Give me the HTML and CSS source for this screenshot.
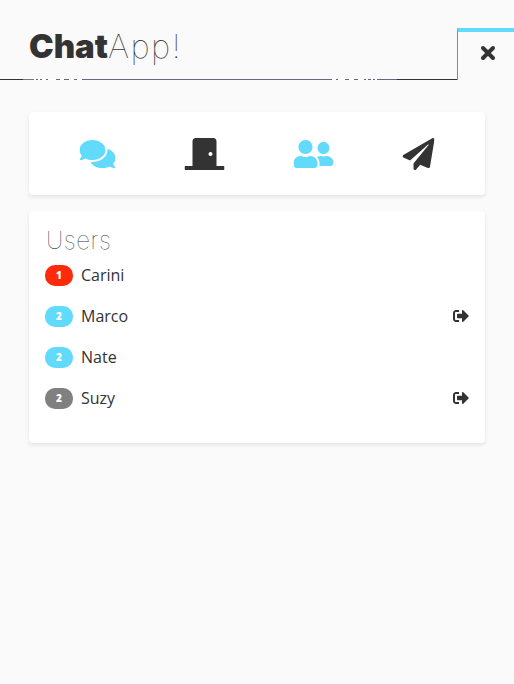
FILE: index.html
```html
<!DOCTYPE html>
<html lang="en">
<head>
<meta charset="utf-8">
<title>ChatApp!</title>
<link rel="stylesheet" href="styles.css">
</head>
<body>
<header class="header">
  <h1 class="brand"><span class="brand-bold">Chat</span><span class="brand-thin">App!</span></h1>
  <button class="close" aria-label="Close"><svg viewBox="0 0 16 16"><path d="M3 3L13 13M13 3L3 13"/></svg></button>
</header>
<main class="content">
  <nav class="card tabs">
    <svg class="icon active" width="36" height="32" viewBox="0 0 576 512"><path d="M416 192c0-88.4-93.1-160-208-160S0 103.6 0 192c0 34.3 14.1 65.9 38 92-13.4 30.2-35.5 54.2-35.8 54.5-2.2 2.3-2.8 5.7-1.5 8.7S4.8 352 8 352c36.6 0 66.9-12.3 88.7-25 32.2 15.7 70.3 25 111.3 25 114.9 0 208-71.6 208-160zm122 220c23.9-26 38-57.7 38-92 0-66.9-53.5-124.2-129.3-148.1.9 6.6 1.3 13.3 1.3 20.1 0 105.9-107.7 192-240 192-10.8 0-21.3-.8-31.7-1.9C207.8 439.6 281.8 480 368 480c41 0 79.1-9.2 111.3-25 21.8 12.7 52.1 25 88.7 25 3.2 0 6.1-1.9 7.3-4.8 1.3-2.9.7-6.3-1.5-8.7-.3-.3-22.4-24.2-35.8-54.5z"/></svg>
    <svg class="icon" width="40" height="32" viewBox="0 0 640 512"><path d="M624 448H512V50.8C512 22.78 490.47 0 464 0H175.99c-26.47 0-48 22.78-48 50.8V448H16c-8.84 0-16 7.16-16 16v32c0 8.84 7.16 16 16 16h608c8.84 0 16-7.16 16-16v-32c0-8.84-7.16-16-16-16zM415.99 288c-17.67 0-32-14.33-32-32s14.33-32 32-32 32 14.33 32 32c.01 17.67-14.32 32-32 32z"/></svg>
    <svg class="icon active" width="40" height="32" viewBox="0 0 640 512"><path d="M192 256c61.900 0 112-50.100 112-112S253.900 32 192 32 80 82.100 80 144s50.100 112 112 112zm76.800 32h-8.300c-20.800 10-43.900 16-68.500 16s-47.600-6-68.500-16h-8.300C51.600 288 0 339.600 0 403.200V432c0 26.500 21.500 48 48 48h288c26.500 0 48-21.500 48-48v-28.800c0-63.600-51.600-115.200-115.200-115.200zM480 256c53 0 96-43 96-96s-43-96-96-96-96 43-96 96 43 96 96 96zm48 32h-3.800c-13.900 4.800-28.600 8-44.200 8s-30.300-3.200-44.200-8H432c-20.400 0-39.200 5.900-55.700 15.400 24.400 26.300 39.700 61.200 39.700 99.800v38.400c0 2.200-.5 4.300-.6 6.400H592c26.500 0 48-21.500 48-48 0-61.900-50.100-112-112-112z"/></svg>
    <svg class="icon" width="32" height="32" viewBox="0 0 512 512"><path d="M476 3.200L12.500 270.600c-18.100 10.400-15.800 35.600 2.200 43.200L121 358.400l287.300-253.200c5.500-4.900 13.300 2.600 8.600 8.300L176 407v80.500c0 23.600 28.500 32.900 42.500 15.800L282 426l124.600 52.200c14.200 6 30.400-2.900 33-18.200l72-432C515 7.800 493.300-6.800 476 3.200z"/></svg>
  </nav>
  <section class="card users">
    <h2 class="users-title">Users</h2>
    <ul class="user-list">
      <li class="user"><span class="badge red">1</span><span>Carini</span></li>
      <li class="user"><span class="badge">2</span><span>Marco</span><svg class="exit" viewBox="0 0 512 512"><path d="M497 273L329 441c-15 15-41 4.500-41-17v-96H152c-13.300 0-24-10.700-24-24v-96c0-13.300 10.700-24 24-24h136V88c0-21.400 25.900-32 41-17l168 168c9.300 9.400 9.300 24.600 0 34zM192 436v-40c0-6.600-5.400-12-12-12H96c-17.700 0-32-14.300-32-32V160c0-17.700 14.300-32 32-32h84c6.600 0 12-5.400 12-12V76c0-6.600-5.400-12-12-12H96c-53 0-96 43-96 96v192c0 53 43 96 96 96h84c6.600 0 12-5.400 12-12z"/></svg></li>
      <li class="user"><span class="badge">2</span><span>Nate</span></li>
      <li class="user"><span class="badge gray">2</span><span>Suzy</span><svg class="exit" viewBox="0 0 512 512"><path d="M497 273L329 441c-15 15-41 4.500-41-17v-96H152c-13.300 0-24-10.700-24-24v-96c0-13.300 10.700-24 24-24h136V88c0-21.400 25.900-32 41-17l168 168c9.300 9.400 9.300 24.600 0 34zM192 436v-40c0-6.600-5.400-12-12-12H96c-17.700 0-32-14.300-32-32V160c0-17.700 14.300-32 32-32h84c6.600 0 12-5.400 12-12V76c0-6.600-5.400-12-12-12H96c-53 0-96 43-96 96v192c0 53 43 96 96 96h84c6.600 0 12-5.400 12-12z"/></svg></li>
    </ul>
  </section>
</main>
</body>
</html>
```
FILE: styles.css
```css
* { box-sizing: border-box; margin: 0; padding: 0; }
body { background: #fafafa; color: #333; font: 16px/24px "Open Sans", sans-serif; }
.header { height: 80px; padding: 28px 0 0 29px; display: flex; justify-content: space-between;
  background:
    linear-gradient(90deg, transparent 34px, #fff 34px 36px, transparent 36px 38px, #fff 38px 40px, transparent 40px 42px, #fff 42px 46px, transparent 46px 48px, #fff 48px 56px, transparent 56px 60px, #fff 60px 64px, transparent 64px 69px, #fff 69px 74px, transparent 74px 77px, #fff 77px 82px, transparent 82px 332px, #fff 332px 336px, transparent 336px 338px, #fff 338px 345px, transparent 345px 349px, #fff 349px 354px, transparent 354px 358px, #fff 358px 364px, transparent 364px 366px, #fff 366px 368px, transparent 368px 371px, #fff 371px 373px, transparent 373px 375px, #fff 375px 377px, transparent 377px) bottom / 100% 1px no-repeat,
    linear-gradient(90deg, #333 23px, #777784 23px 34px, #666680 34px 397px, #333 397px 457px, transparent 457px) bottom / 100% 1px no-repeat; }
.brand { display: flex; font-size: 34px; line-height: 36px; font-weight: 400; }
.brand-bold { font-family: Inter, sans-serif; font-weight: 900; font-size: 33px; letter-spacing: 0; }
.brand-thin { font-family: Inter, sans-serif; font-weight: 100; font-size: 33px; letter-spacing: 1.4px; }
.close { width: 57px; height: 52px; border: 0; border-top: 4px solid #61dafb; border-left: 1px solid #888; background: #fafafa; display: flex; justify-content: center; padding-top: 13px; padding-left: 3px; }
.close svg { width: 16px; height: 16px; fill: none; stroke: #333; stroke-width: 4; stroke-linecap: round; }
.content { padding: 32px 29px; display: flex; flex-direction: column; gap: 16px; }
.card { background: #fff; border-radius: 4px; box-shadow: 0 2px 4px rgba(0,0,0,.09); }
.tabs { height: 83px; padding: 0 17px 0 16px; display: flex; align-items: center; justify-content: space-around; }
.icon { fill: #333; transform: translateX(0.5px); }
.icon.active { fill: #61dafb; }
.users { height: 232px; padding: 16px; }
.users-title { font: 100 24px/28px Inter, sans-serif; letter-spacing: 0.6px; padding-left: 1px; }
.user-list { list-style: none; display: flex; flex-direction: column; gap: 17px; padding-top: 8px; }
.user { height: 24px; display: flex; align-items: center; gap: 8px; }
.badge { width: 28px; height: 21px; border-radius: 10px; background: #61dafb; color: #fff; font-size: 10px; font-weight: 800; line-height: 21px; text-align: center; }
.red { background: #ff2a0a; }
.gray { background: #808080; }
.exit { width: 16px; height: 16px; margin-left: auto; fill: #333; }
```
